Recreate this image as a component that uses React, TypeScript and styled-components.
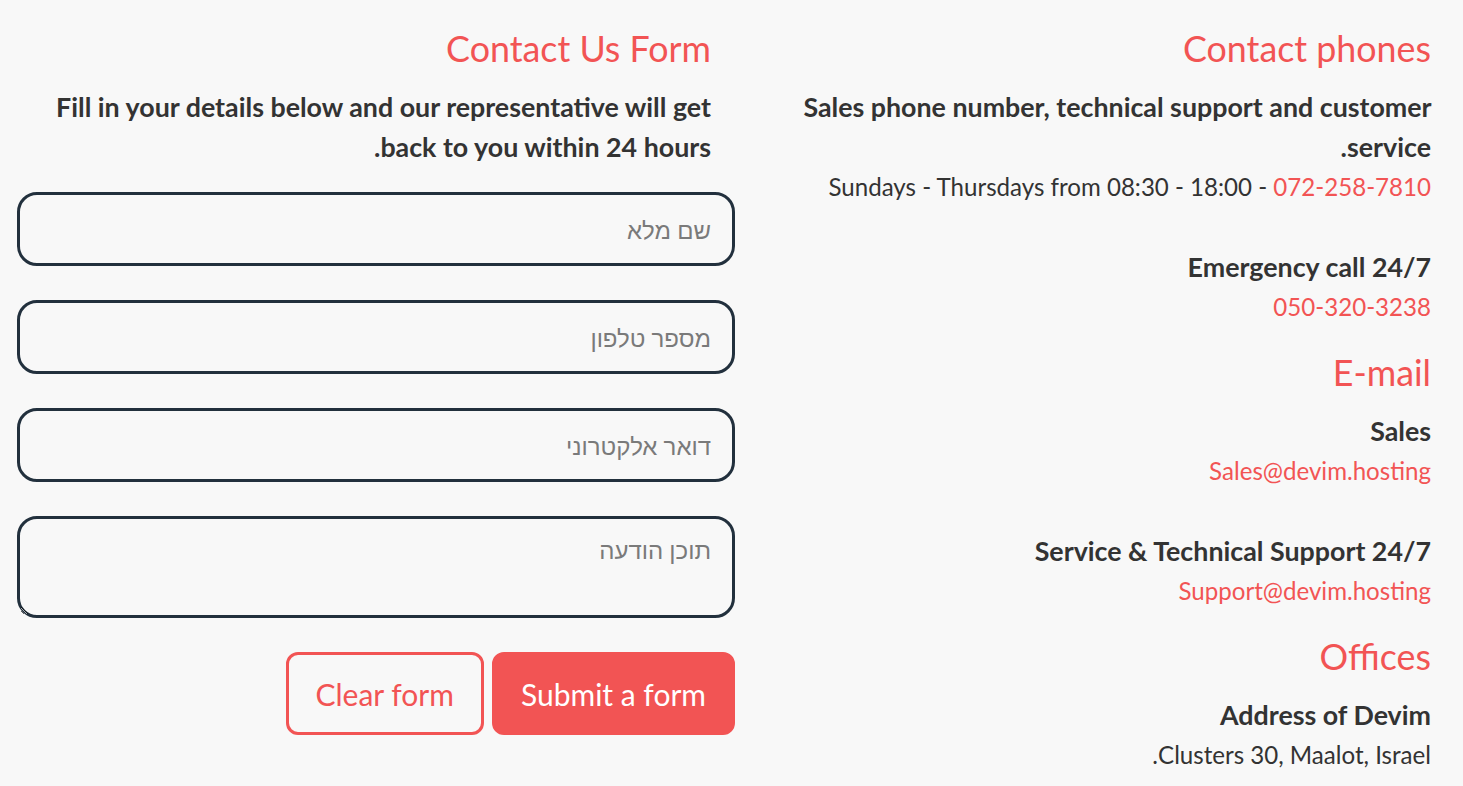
import React from "react";
import styled, { createGlobalStyle } from "styled-components";

const GlobalStyle = createGlobalStyle`
  body {
    margin: 0;
    background: #f8f8f8;
    font-family: Lato, "Liberation Sans", sans-serif;
    color: #333333;
  }
`;

const Page = styled.div`
  direction: rtl;
  display: grid;
  grid-template-columns: 664px 718px;
  column-gap: 32px;
  padding: 3px 32px 0 17px;
`;

const InfoColumn = styled.div`
  display: flex;
  flex-direction: column;
`;

const FormColumn = styled.div`
  display: flex;
  flex-direction: column;
`;

const Heading = styled.h2<{ $inset?: boolean }>`
  margin: 24px 0 16px;
  padding-right: ${(p) => (p.$inset ? "24px" : "0")};
  font-size: 35.8px;
  line-height: 44px;
  font-weight: 400;
  color: #f25454;
`;

const Intro = styled.p`
  margin: 0;
  padding-right: 24px;
  font-size: 26.8px;
  line-height: 40px;
  font-weight: 700;
`;

const Label = styled.div<{ $space?: boolean }>`
  font-size: 26.8px;
  line-height: 40px;
  font-weight: 700;
  margin-bottom: ${(p) => (p.$space ? "40px" : "0")};
`;

const Line = styled.div<{ $space?: boolean }>`
  font-size: 24.1px;
  line-height: 40px;
  font-weight: 400;
  margin-bottom: ${(p) => (p.$space ? "40px" : "0")};
`;

const Accent = styled.span`
  color: #f25454;
`;

const Form = styled.form`
  display: flex;
  flex-direction: column;
  gap: 34px;
  margin-top: 25px;
`;

const fieldStyle = `
  box-sizing: border-box;
  width: 100%;
  border: 3px solid #22303d;
  border-radius: 20px;
  background: transparent;
  padding: 0 21px;
  font-family: Lato, "Liberation Sans", sans-serif;
  font-size: 24px;
  color: #333333;
  direction: rtl;
  outline: none;
  &::placeholder {
    color: #7a7a7a;
  }
`;

const Field = styled.input`
  ${fieldStyle}
  height: 74px;
`;

const MessageField = styled.textarea`
  ${fieldStyle}
  height: 102px;
  padding-top: 16px;
  line-height: 30px;
`;

const Actions = styled.div`
  display: flex;
  gap: 8px;
`;

const Button = styled.button<{ $outline?: boolean }>`
  box-sizing: border-box;
  height: 83px;
  padding: 0 27px;
  border-radius: 12px;
  border: ${(p) => (p.$outline ? "3px" : "2px")} solid #f25454;
  background: ${(p) => (p.$outline ? "transparent" : "#f25454")};
  color: ${(p) => (p.$outline ? "#f25454" : "#ffffff")};
  font-family: Lato, "Liberation Sans", sans-serif;
  font-size: 30px;
  cursor: pointer;
`;

export default function App() {
  return (
    <>
      <GlobalStyle />
      <Page>
        <InfoColumn>
          <Heading>Contact phones</Heading>
          <Label>Sales phone number, technical support and customer service.</Label>
          <Line $space>
            Sundays - Thursdays from 08:30 - 18:00 - <Accent>072-258-7810</Accent>
          </Line>
          <Label>Emergency call 24/7</Label>
          <Line>
            <Accent>050-320-3238</Accent>
          </Line>

          <Heading>E-mail</Heading>
          <Label>Sales</Label>
          <Line $space>
            <Accent>Sales@devim.hosting</Accent>
          </Line>
          <Label>Service &amp; Technical Support 24/7</Label>
          <Line>
            <Accent>Support@devim.hosting</Accent>
          </Line>

          <Heading>Offices</Heading>
          <Label>Address of Devim</Label>
          <Line>Clusters 30, Maalot, Israel.</Line>
        </InfoColumn>

        <FormColumn>
          <Heading $inset>Contact Us Form</Heading>
          <Intro>
            Fill in your details below and our representative will get back to you within 24 hours.
          </Intro>
          <Form onSubmit={(e) => e.preventDefault()}>
            <Field placeholder="שם מלא" />
            <Field placeholder="מספר טלפון" />
            <Field placeholder="דואר אלקטרוני" />
            <MessageField placeholder="תוכן הודעה" />
            <Actions>
              <Button type="submit">Submit a form</Button>
              <Button type="reset" $outline>
                Clear form
              </Button>
            </Actions>
          </Form>
        </FormColumn>
      </Page>
    </>
  );
}
